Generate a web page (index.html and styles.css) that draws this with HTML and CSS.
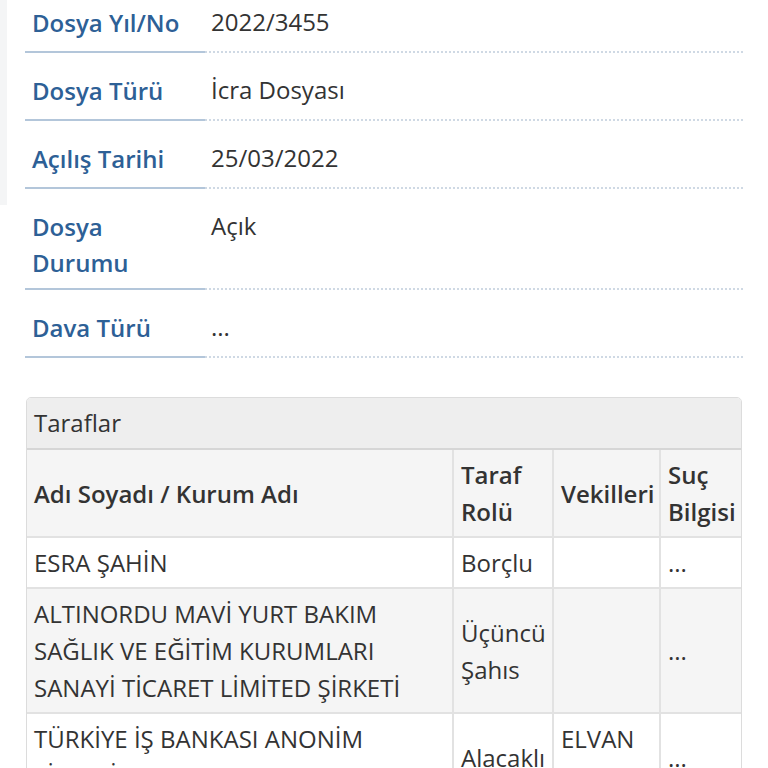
FILE: index.html
```html
<!DOCTYPE html>
<html lang="tr">
<head>
<meta charset="utf-8">
<link rel="stylesheet" href="styles.css">
</head>
<body>
<div class="page">
  <dl class="info">
    <div class="row"><dt>Dosya Yıl/No</dt><dd>2022/3455</dd></div>
    <div class="row"><dt>Dosya Türü</dt><dd>İcra Dosyası</dd></div>
    <div class="row"><dt>Açılış Tarihi</dt><dd>25/03/2022</dd></div>
    <div class="row"><dt>Dosya Durumu</dt><dd>Açık</dd></div>
    <div class="row"><dt>Dava Türü</dt><dd>...</dd></div>
  </dl>

  <div class="panel">
    <div class="panel-heading">Taraflar</div>
    <table class="parties">
      <colgroup>
        <col class="c1"><col class="c2"><col class="c3"><col class="c4">
      </colgroup>
      <thead>
        <tr><th>Adı Soyadı / Kurum Adı</th><th>Taraf Rolü</th><th>Vekilleri</th><th>Suç Bilgisi</th></tr>
      </thead>
      <tbody>
        <tr><td>ESRA ŞAHİN</td><td>Borçlu</td><td></td><td>...</td></tr>
        <tr class="alt"><td>ALTINORDU MAVİ YURT BAKIM SAĞLIK VE EĞİTİM KURUMLARI SANAYİ TİCARET LİMİTED ŞİRKETİ</td><td>Üçüncü Şahıs</td><td></td><td>...</td></tr>
        <tr><td>TÜRKİYE İŞ BANKASI ANONİM ŞİRKETİ</td><td>Alacaklı</td><td>ELVAN ALTUN</td><td>...</td></tr>
      </tbody>
    </table>
  </div>
</div>
</body>
</html>
```

FILE: styles.css
```css
* { box-sizing: border-box; }
html, body { margin: 0; padding: 0; background: #fff; }
body {
  font-family: "Open Sans", "Noto Sans", sans-serif;
  font-size: 24px;
  line-height: 37px;
  color: #333;
  overflow: hidden;
  position: relative;
}
body::before {
  content: "";
  position: absolute;
  left: 0; top: 0;
  width: 7px; height: 205px;
  background: #f4f5f6;
}
.page {
  padding: 0 25px 0 25px;
  width: 768px;
}
.info {
  margin: -15px 0 0 0;
  width: 718px;
}
.row {
  display: flex;
}
.row dt {
  width: 180px;
  flex: 0 0 180px;
  padding: 20px 12px 7px 7px;
  line-height: 36px;
  font-weight: 600;
  color: #2d6096;
  border-bottom: 2px solid #b3c6da;
}
.row dd {
  flex: 1;
  margin: 0;
  padding: 19px 0 11px 6px;
  line-height: 36px;
  border-bottom: 2px dotted #cfd9e4;
}
.panel {
  margin-top: 39px;
  margin-left: 1px;
  width: 716px;
  border: 1px solid #dcdcdc;
  border-radius: 5px;
  overflow: hidden;
}
.panel-heading {
  background: #eeeeee;
  padding: 6px 7px 8px 7px;
  height: 52px;
  border-bottom: 2px solid #d6d6d6;
}
.parties {
  width: 100%;
  border-collapse: collapse;
  table-layout: fixed;
}
.c1 { width: 426px; }
.c2 { width: 100px; }
.c3 { width: 107px; }
.c4 { width: auto; }
.parties th, .parties td {
  padding: 6px 6px 6px 7px;
  vertical-align: middle;
  text-align: left;
  border: 2px solid #e2e2e2;
}
.parties tr > :first-child { border-left: none; }
.parties tr > :last-child { border-right: none; }
.parties thead tr:first-child th { border-top: none; }
.parties th {
  font-weight: 600;
  background: #f5f5f5;
}
.parties td { background: #fff; }
.parties tr.alt td { background: #f5f5f5; }
```
